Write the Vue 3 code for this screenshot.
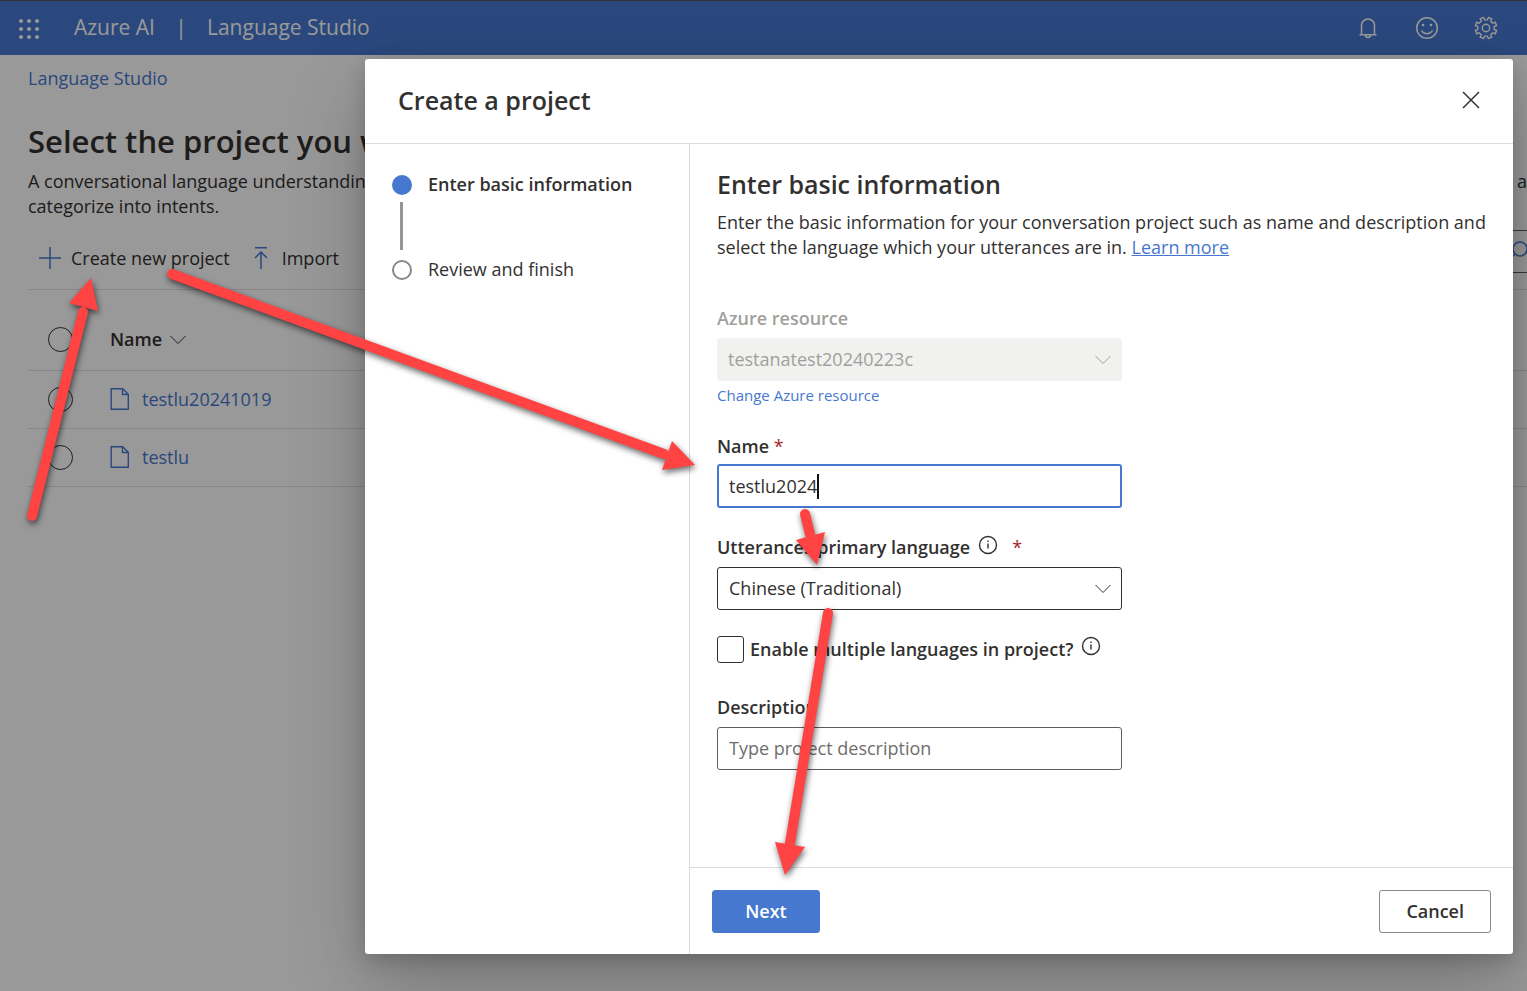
<script setup>
import { ref } from 'vue'

const name = ref('testlu2024')
const description = ref('')
const language = ref('zh-hant')
const multilingual = ref(false)
const projects = ['testlu20241019', 'testlu']

const arrows = [
  { shaft: 'M32 516L83 312', head: '91,278 69,303 98,311' },
  { shaft: 'M172 274L664 454', head: '695,465 672,441 662,470' },
  { shaft: 'M805 514L810 534', head: '817,565 796,540 825,532' },
  { shaft: 'M828 613L790 843', head: '785,875 775,842 805,847' },
]

// Outline of an eight-toothed gear centred on the origin
const polar = (deg, r) => {
  const t = (deg * Math.PI) / 180
  return `${(r * Math.cos(t)).toFixed(2)} ${(r * Math.sin(t)).toFixed(2)}`
}
const gear =
  Array.from({ length: 8 }, (_, i) => {
    const a = i * 45 + 22.5
    return `${i ? 'L' : 'M'}${polar(a - 12, 8.3)}L${polar(a - 10, 10.9)}L${polar(a + 10, 10.9)}L${polar(a + 12, 8.3)}`
  }).join('') + 'Z'
</script>

<template>
  <div class="app">
    <header class="topbar">
      <button class="icon-btn waffle" aria-label="Apps">
        <svg width="22" height="22" viewBox="0 0 22 22" fill="currentColor">
          <template v-for="y in [4, 12, 20]" :key="y">
            <circle v-for="x in [3, 11, 19]" :key="x" :cx="x" :cy="y" r="2" />
          </template>
        </svg>
      </button>
      <a href="#" class="brand">Azure AI</a>
      <span class="bar">|</span>
      <a href="#" class="brand">Language Studio</a>
      <div class="tools">
        <button class="icon-btn" aria-label="Notifications">
          <svg width="24" height="24" viewBox="0 0 24 24" fill="none" stroke="currentColor" stroke-width="1.5">
            <path d="M5.500 18.500V9.500a6.500 6.500 0 0 1 13 0v9M3.500 18.700h17M9.500 19a2.500 2.500 0 0 0 5 0" />
          </svg>
        </button>
        <button class="icon-btn" aria-label="Feedback">
          <svg width="24" height="24" viewBox="0 0 24 24" fill="none" stroke="currentColor" stroke-width="1.5">
            <circle cx="12" cy="12" r="10.300" />
            <path d="M6.500 14.500c2.400 4.400 8.600 4.400 11 0" />
            <circle cx="8" cy="9" r="1.300" fill="currentColor" stroke="none" />
            <circle cx="16" cy="9" r="1.300" fill="currentColor" stroke="none" />
          </svg>
        </button>
        <button class="icon-btn" aria-label="Settings">
          <svg width="24" height="24" viewBox="-12 -12 24 24" fill="none" stroke="currentColor" stroke-width="1.4" stroke-linejoin="round">
            <circle r="3.700" />
            <path :d="gear" />
          </svg>
        </button>
      </div>
    </header>

    <main class="page">
      <a href="#" class="crumb">Language Studio</a>
      <h1>Select the project you want</h1>
      <p class="intro">
        <span class="intro-line"><span>A conversational language understanding</span><span>a</span></span>
        <span class="intro-line">categorize into intents.</span>
      </p>

      <div class="commands">
        <button class="command">
          <svg width="22" height="22" viewBox="0 0 22 22" fill="none" stroke="currentColor" stroke-width="1.5">
            <path d="M11 0v22M0 11h22" />
          </svg>
          Create new project
        </button>
        <button class="command">
          <svg width="22" height="22" viewBox="0 0 22 22" fill="none" stroke="currentColor" stroke-width="1.5">
            <path d="M5 .8h12M11 22V5M5 11l6-6 6 6" />
          </svg>
          Import
        </button>
        <button class="search" aria-label="Search">
          <svg width="18" height="22" viewBox="0 0 18 22" fill="none" stroke="currentColor" stroke-width="1.5">
            <circle cx="11" cy="8" r="7" />
            <path d="M6 13l-5 5" />
          </svg>
        </button>
      </div>

      <table class="projects">
        <thead>
          <tr>
            <th class="pick"><input type="radio" name="pick" aria-label="Select all" /></th>
            <th>
              <span class="cell">
                Name
                <svg width="16" height="10" viewBox="0 0 16 10" fill="none" stroke="currentColor"><path d="M.500 1L8 8.500 15.500 1" /></svg>
              </span>
            </th>
          </tr>
        </thead>
        <tbody>
          <tr v-for="p in projects" :key="p">
            <td class="pick"><input type="radio" name="pick" :aria-label="p" /></td>
            <td>
              <a href="#" class="cell file">
                <svg width="20" height="22" viewBox="0 0 20 22" fill="none" stroke="currentColor" stroke-width="1.400">
                  <path d="M1.200 .7h11.500l5.600 5.600v15H1.200zM12.500 .7v5.800h5.800" />
                </svg>
                {{ p }}
              </a>
            </td>
          </tr>
        </tbody>
      </table>
    </main>

    <div class="overlay">
      <section class="dialog" role="dialog" aria-labelledby="dialog-title">
        <header class="dialog-head">
          <h2 id="dialog-title">Create a project</h2>
          <button class="icon-btn close" aria-label="Close">
            <svg width="18" height="18" viewBox="0 0 18 18" fill="none" stroke="currentColor" stroke-width="1.500">
              <path d="M1 1l16 16M17 1L1 17" />
            </svg>
          </button>
        </header>

        <div class="dialog-body">
          <ol class="steps">
            <li class="step current"><span class="dot"></span>Enter basic information</li>
            <li class="step"><span class="dot"></span>Review and finish</li>
          </ol>

          <div class="panel">
            <form class="form" @submit.prevent>
              <h2>Enter basic information</h2>
              <p class="lead">
                Enter the basic information for your conversation project such as name and description and<br />
                select the language which your utterances are in. <a href="#">Learn more</a>
              </p>

              <div class="fields">
                <label class="label muted" for="resource">Azure resource</label>
                <div class="select disabled">
                  <select id="resource" disabled>
                    <option>testanatest20240223c</option>
                  </select>
                  <svg width="16" height="10" viewBox="0 0 16 10" fill="none" stroke="currentColor"><path d="M.500 1L8 8.500 15.500 1" /></svg>
                </div>
                <a href="#" class="change">Change Azure resource</a>

                <label class="label name-label" for="name">Name <span class="req">*</span></label>
                <div class="textbox focused">
                  <input id="name" v-model="name" type="text" />
                  <span class="caret"></span>
                </div>

                <div class="label-row">
                  <label class="label" for="language">Utterances primary language</label>
                  <svg class="info" width="20" height="20" viewBox="0 0 20 20" fill="none" stroke="currentColor" stroke-width="1.400">
                    <circle cx="10" cy="10" r="8.500" />
                    <path d="M10 8.500v5M10 5.500v1.500" />
                  </svg>
                  <span class="req">*</span>
                </div>
                <div class="select">
                  <select id="language" v-model="language">
                    <option value="zh-hant">Chinese (Traditional)</option>
                  </select>
                  <svg width="16" height="10" viewBox="0 0 16 10" fill="none" stroke="currentColor"><path d="M.500 1L8 8.500 15.500 1" /></svg>
                </div>

                <div class="check-row">
                  <input id="multi" v-model="multilingual" type="checkbox" />
                  <label class="label" for="multi">Enable multiple languages in project?</label>
                  <svg class="info" width="20" height="20" viewBox="0 0 20 20" fill="none" stroke="currentColor" stroke-width="1.400">
                    <circle cx="10" cy="10" r="8.500" />
                    <path d="M10 8.500v5M10 5.500v1.500" />
                  </svg>
                </div>

                <label class="label" for="description">Description</label>
                <div class="textbox">
                  <input id="description" v-model="description" class="wide" type="text" placeholder="Type project description" />
                </div>
              </div>
            </form>

            <footer class="actions">
              <button class="btn primary">Next</button>
              <button class="btn">Cancel</button>
            </footer>
          </div>
        </div>
      </section>
    </div>

    <svg class="arrows" width="1527" height="991" viewBox="0 0 1527 991" aria-hidden="true">
      <g v-for="a in arrows" :key="a.shaft">
        <path :d="a.shaft" fill="none" stroke="#ff4343" stroke-width="10" stroke-linecap="round" />
        <polygon :points="a.head" fill="#ff4343" />
      </g>
    </svg>
  </div>
</template>

<style>
body {
  margin: 0;
  overflow: hidden;
}
</style>

<style scoped>
* {
  box-sizing: border-box;
}
.app {
  position: relative;
  min-height: 100vh;
  overflow: hidden;
  background: #fff;
  color: #323130;
  font: 18px/25px "Open Sans", "Noto Sans", sans-serif;
}
button,
input,
select {
  font: inherit;
  color: inherit;
}
h1,
h2,
p,
ol {
  margin: 0;
  padding: 0;
}
svg {
  display: block;
  flex: none;
}
a {
  color: #4778d0;
  text-decoration: none;
}
.icon-btn {
  display: flex;
  padding: 0;
  border: 0;
  background: none;
}

/* top bar */
.topbar {
  display: flex;
  align-items: center;
  height: 55px;
  padding: 0 29px 1px 18px;
  border-top: 1px solid #555;
  background: #4778d0;
  color: #fff;
  font-size: 21px;
}
.waffle {
  margin-right: 34px;
}
.brand {
  color: inherit;
}
.bar {
  width: 52px;
  text-align: center;
}
.tools {
  display: flex;
  gap: 35px;
  margin-left: auto;
}

/* page behind the dialog */
.page {
  padding: 11px 0 0 28px;
  white-space: nowrap;
}
.crumb {
  display: block;
}
h1 {
  margin-top: 26px;
  font-size: 31px;
  line-height: 48px;
  font-weight: 600;
}
.intro {
  margin-top: 4px;
}
.intro-line {
  display: flex;
  justify-content: space-between;
}
.commands {
  display: flex;
  align-items: center;
  gap: 20px;
  height: 71px;
  padding: 8px 0 0 11px;
  border-bottom: 1px solid #e1dfdd;
}
.command {
  display: flex;
  align-items: center;
  gap: 10px;
  padding: 0;
  border: 0;
  background: none;
}
.command svg,
.search {
  color: #4778d0;
}
.search {
  align-self: flex-start;
  display: flex;
  align-items: center;
  height: 43px;
  margin: 3px 0 0 auto;
  padding: 0 0 0 12px;
  border: solid #605e5c;
  border-width: 1px 0;
  background: none;
}
.projects {
  width: 100%;
  border-collapse: collapse;
  text-align: left;
}
.projects th,
.projects td {
  height: 58px;
  padding: 0;
  border-bottom: 1px solid #e1dfdd;
}
.projects th {
  height: 80px;
  padding-top: 20px;
  font-weight: 600;
}
.projects .pick {
  width: 82px;
  padding-left: 20px;
}
.pick input {
  display: block;
  width: 25px;
  height: 25px;
  margin: 0;
  border: 1px solid #323130;
  border-radius: 50%;
  appearance: none;
}
.cell {
  display: flex;
  align-items: center;
  gap: 8px;
}
.file {
  gap: 12px;
}

/* dialog */
.overlay {
  position: absolute;
  inset: 0;
  display: flex;
  padding: 59px 14px 37px 365px;
  background: rgba(0, 0, 0, 0.4);
}
.dialog {
  flex: 1;
  display: flex;
  flex-direction: column;
  min-width: 0;
  border-radius: 3px;
  background: #fff;
  box-shadow: 0 34px 78px rgba(0, 0, 0, 0.22), 0 6px 20px rgba(0, 0, 0, 0.18);
}
.dialog-head {
  display: flex;
  align-items: center;
  justify-content: space-between;
  height: 85px;
  padding: 0 33px 2px;
  border-bottom: 1px solid #dcdcdc;
}
h2 {
  font-size: 25px;
  line-height: 36px;
  font-weight: 600;
}
.dialog-body {
  flex: 1;
  display: flex;
}
.steps {
  width: 324px;
  padding: 28px 0 0 27px;
  list-style: none;
}
.step {
  position: relative;
  display: flex;
  align-items: center;
  gap: 16px;
  margin-bottom: 60px;
}
.dot {
  width: 20px;
  height: 20px;
  border: 2px solid #8a8886;
  border-radius: 50%;
}
.current {
  font-weight: 600;
}
.current .dot {
  border-color: #4778d0;
  background: #4778d0;
}
.current::after {
  content: "";
  position: absolute;
  top: 30px;
  left: 8px;
  width: 3px;
  height: 48px;
  background: #979593;
}
.panel {
  flex: 1;
  display: flex;
  flex-direction: column;
  border-left: 1px solid #dcdcdc;
}
.form {
  flex: 1;
  padding: 22px 27px 0;
}
.lead {
  margin-top: 8px;
  white-space: nowrap;
}
.lead a {
  text-decoration: underline;
}
.fields {
  max-width: 405px;
  margin-top: 46px;
}
.label {
  display: block;
  font-weight: 600;
}
.muted {
  color: #a19f9d;
}
.select,
.textbox {
  display: flex;
  align-items: center;
  height: 43px;
  padding: 0 11px;
  border: 1px solid #323130;
  border-radius: 3px;
}
.select {
  position: relative;
}
.select select {
  flex: 1;
  height: 41px;
  padding: 0;
  border: 0;
  outline: 0;
  background: none;
  opacity: 1;
  appearance: none;
}
.select svg {
  position: absolute;
  right: 10px;
  pointer-events: none;
}
.disabled {
  margin-top: 7px;
  padding: 0 10px;
  border-color: #f3f2f1;
  background: #f1f1ef;
  color: #a19f9d;
}
.change {
  display: block;
  margin-top: 2px;
  font-size: 15px;
}
.name-label {
  margin: 26px 0 5px;
}
.req {
  color: #a4262c;
  font-weight: 400;
}
.textbox {
  margin-top: 7px;
  border-color: #605e5c;
}
.textbox input {
  min-width: 0;
  padding: 0;
  border: 0;
  outline: 0;
  background: none;
  field-sizing: content;
}
.textbox .wide {
  flex: 1;
}
.textbox input::placeholder {
  color: #706e6c;
  opacity: 1;
}
.focused {
  height: 44px;
  margin-top: 0;
  padding: 0 10px;
  border: 2px solid #4778d0;
}
.caret {
  width: 2px;
  height: 25px;
  background: #111;
}
.label-row {
  display: flex;
  align-items: center;
  margin: 27px 0 7px;
}
.info {
  align-self: flex-start;
  margin: 0 14px 0 8px;
}
.check-row {
  display: flex;
  align-items: center;
  gap: 6px;
  height: 27px;
  margin: 26px 0 32px;
}
.check-row input {
  flex: none;
  width: 27px;
  height: 27px;
  margin: 0;
  border: 1px solid #323130;
  border-radius: 3px;
  appearance: none;
}
.check-row .info {
  margin-left: 2px;
}
.check-row .label {
  white-space: nowrap;
}
.actions {
  display: flex;
  justify-content: space-between;
  padding: 22px 22px 21px;
  border-top: 1px solid #dcdcdc;
}
.btn {
  min-width: 108px;
  height: 43px;
  padding: 0 26px 1px;
  border: 1px solid #8a8886;
  border-radius: 3px;
  background: #fff;
  font-weight: 600;
}
.primary {
  border-color: #4778d0;
  background: #4778d0;
  color: #fff;
}

/* pointer annotations drawn over the screen */
.arrows {
  position: absolute;
  top: 0;
  left: 0;
  pointer-events: none;
  filter: drop-shadow(1px 3px 3px rgba(0, 0, 0, 0.6));
}
</style>
